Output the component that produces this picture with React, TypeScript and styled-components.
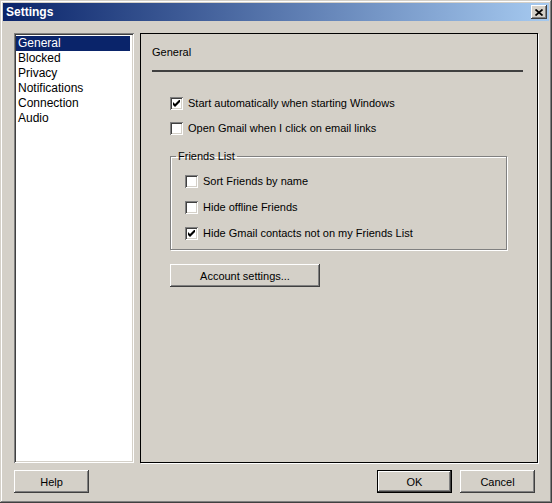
import React from 'react';
import styled, { createGlobalStyle } from 'styled-components'

const GlobalStyle = createGlobalStyle`
    html, body {
        margin: 0;
        padding: 0;
        background: #d4d0c8;
    }
    body {
        font-family: "Liberation Sans", Arial, sans-serif;
        font-size: 11px;
        color: #000;
    }
`

const raised = `
    box-shadow: inset -1px -1px #404040, inset 1px 1px #fff, inset -2px -2px #808080, inset 2px 2px #d4d0c8;
`
const sunken = `
    box-shadow: inset 1px 1px #808080, inset -1px -1px #fff, inset 2px 2px #404040, inset -2px -2px #d4d0c8;
`

interface CheckProps {
    label: string
    checked?: boolean
}

const Check = (props: CheckProps) => {
    return (
        <CheckRow>
            <Box>
                {props.checked &&
                    <svg width="7" height="7" viewBox="0 0 7 7">
                        <polygon points="0,2 2,4 7,-1 7,2 2,7 0,5" fill="#000" />
                    </svg>
                }
            </Box>
            <span>{props.label}</span>
        </CheckRow>
    )
}

const items = ['General', 'Blocked', 'Privacy', 'Notifications', 'Connection', 'Audio']

const App = () => {
    return (
        <>
            <GlobalStyle />
            <Window>
                <TitleBar>
                    <Title>Settings</Title>
                    <CloseButton>
                        <svg width="8" height="7" viewBox="0 0 8 7">
                            <path d="M0.5 0.5 L7.5 6.5 M7.5 0.5 L0.5 6.5" stroke="#000" strokeWidth="1.7" />
                        </svg>
                    </CloseButton>
                </TitleBar>
                <Body>
                    <Main>
                        <List>
                            {items.map((it, i) => (
                                <ListItem key={it} selected={i === 0}>{it}</ListItem>
                            ))}
                        </List>
                        <Panel>
                            <Heading>General</Heading>
                            <Separator />
                            <Options>
                                <OptionStack>
                                    <Check label="Start automatically when starting Windows" checked />
                                    <Check label="Open Gmail when I click on email links" />
                                </OptionStack>
                                <Group>
                                    <GroupLabel>Friends List</GroupLabel>
                                    <GroupRows>
                                        <Check label="Sort Friends by name" />
                                        <Check label="Hide offline Friends" />
                                        <Check label="Hide Gmail contacts not on my Friends List" checked />
                                    </GroupRows>
                                </Group>
                                <Button width={150}>Account settings...</Button>
                            </Options>
                        </Panel>
                    </Main>
                    <Footer>
                        <Button width={75}>Help</Button>
                        <FooterRight>
                            <Button width={75} isDefault>OK</Button>
                            <Button width={75}>Cancel</Button>
                        </FooterRight>
                    </Footer>
                </Body>
            </Window>
        </>
    );
}

const Window = styled.div`
    width: 552px;
    height: 503px;
    box-sizing: border-box;
    padding: 3px;
    display: flex;
    flex-direction: column;
    background: #d4d0c8;
    box-shadow: inset -1px -1px #404040, inset 1px 1px #d4d0c8, inset -2px -2px #808080, inset 2px 2px #fff;
`
const TitleBar = styled.div`
    height: 18px;
    flex: none;
    display: flex;
    align-items: center;
    justify-content: space-between;
    padding: 0 2px 0 3px;
    background: linear-gradient(to right, #0a246a, #a6caf0);
`
const Title = styled.div`
    color: #fff;
    font-weight: bold;
    font-size: 12px;
    line-height: 18px;
`
const CloseButton = styled.div`
    width: 16px;
    height: 14px;
    display: flex;
    align-items: center;
    justify-content: center;
    background: #d4d0c8;
    ${raised}
`
const Body = styled.div`
    flex: 1;
    display: flex;
    flex-direction: column;
    padding: 12px 11px 6px 11px;
    gap: 7px;
`
const Main = styled.div`
    height: 430px;
    flex: none;
    display: flex;
    gap: 6px;
`
const List = styled.div`
    width: 120px;
    box-sizing: border-box;
    padding: 3px 2px 2px 2px;
    background: #fff;
    ${sunken}
    font-size: 12px;
`
const ListItem = styled.div<{ selected?: boolean }>`
    height: 15px;
    line-height: 15px;
    padding-left: 2px;
    margin-right: 2px;
    background: ${(p) => (p.selected ? '#0a246a' : 'transparent')};
    color: ${(p) => (p.selected ? '#fff' : '#000')};
`
const Panel = styled.div`
    width: 398px;
    box-sizing: border-box;
    border: 1px solid #000;
    box-shadow: 1px 1px 0 #fff;
    padding: 12px 14px 0 11px;
    display: flex;
    flex-direction: column;
`
const Heading = styled.div`
    line-height: 13px;
    height: 13px;
`
const Separator = styled.div`
    margin-top: 11px;
    height: 2px;
    background: #404040;
`
const Options = styled.div`
    display: flex;
    flex-direction: column;
    align-items: flex-start;
    padding-left: 18px;
    padding-top: 25px;
`
const OptionStack = styled.div`
    display: flex;
    flex-direction: column;
    gap: 12px;
`
const CheckRow = styled.div`
    display: flex;
    align-items: center;
    gap: 5px;
    height: 13px;
    line-height: 13px;
    white-space: nowrap;
`
const Box = styled.div`
    width: 13px;
    height: 13px;
    flex: none;
    box-sizing: border-box;
    background: #fff;
    ${sunken}
    display: flex;
    align-items: center;
    justify-content: center;
`
const Group = styled.fieldset`
    margin: 15px 0 0 0;
    padding: 0;
    width: 337px;
    box-sizing: border-box;
    border: 1px solid #808080;
    box-shadow: 1px 1px 0 #fff, inset 1px 1px 0 #fff;
    min-width: 0;
`
const GroupLabel = styled.legend`
    margin-left: 5px;
    padding: 0 2px;
    line-height: 13px;
`
const GroupRows = styled.div`
    display: flex;
    flex-direction: column;
    gap: 13px;
    padding: 12px 0 9px 14px;
`
const Button = styled.div<{ width: number; isDefault?: boolean }>`
    width: ${(p) => p.width}px;
    height: 23px;
    box-sizing: border-box;
    display: flex;
    align-items: center;
    justify-content: center;
    background: #d4d0c8;
    border: ${(p) => (p.isDefault ? '1px solid #000' : 'none')};
    ${raised}
    margin-top: 14px;
`
const Footer = styled.div`
    display: flex;
    justify-content: space-between;
    align-items: center;
    padding-right: 3px;
    ${Button} {
        margin-top: 0;
    }
`
const FooterRight = styled.div`
    display: flex;
    gap: 8px;
`

export default App;
